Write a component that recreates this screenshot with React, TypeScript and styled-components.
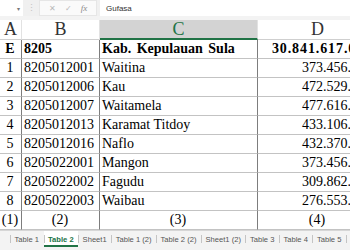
import styled, { createGlobalStyle, css } from "styled-components";

const GlobalStyle = createGlobalStyle`
  html, body {
    margin: 0;
    padding: 0;
    width: 350px;
    height: 250px;
    overflow: hidden;
    background: #ffffff;
  }
`;

const rows = [
  ["1", "8205012001", "Waitina", "373.456.000"],
  ["2", "8205012006", "Kau", "472.529.000"],
  ["3", "8205012007", "Waitamela", "477.616.000"],
  ["4", "8205012013", "Karamat Titdoy", "433.106.000"],
  ["5", "8205012016", "Naflo", "432.370.000"],
  ["6", "8205022001", "Mangon", "373.456.000"],
  ["7", "8205022002", "Fagudu", "309.862.000"],
  ["8", "8205022003", "Waibau", "276.553.000"],
];

const tabs = [
  "Table 1",
  "Table 2",
  "Sheet1",
  "Table 1 (2)",
  "Table 2 (2)",
  "Sheet1 (2)",
  "Table 3",
  "Table 4",
  "Table 5",
  "Table 6",
];

export default function App() {
  return (
    <Screen>
      <GlobalStyle />
      <FormulaBar>
        <NameBox>
          <Caret>▾</Caret>
        </NameBox>
        <Grip>⋮</Grip>
        <FxButtons>
          <FxIcon>✕</FxIcon>
          <FxIcon>✓</FxIcon>
          <FxLabel>fx</FxLabel>
        </FxButtons>
        <FormulaInput>Gufasa</FormulaInput>
      </FormulaBar>

      <Sheet>
        <ColHead>A</ColHead>
        <ColHead>B</ColHead>
        <ColHead $selected>C</ColHead>
        <ColHead>D</ColHead>

        <Cell $align="center" $bold>E</Cell>
        <Cell $bold>8205</Cell>
        <Cell $bold $wide>Kab. Kepulauan Sula</Cell>
        <Amount $bold>30.841.617.000</Amount>

        {rows.map((r) => (
          <Row key={r[1]} r={r} />
        ))}

        <Cell $align="center">(1)</Cell>
        <Cell $align="center">(2)</Cell>
        <Cell $align="center">(3)</Cell>
        <Cell $align="center">(4)</Cell>
      </Sheet>

      <TabBar>
        {tabs.map((t) => (
          <Tab key={t} $active={t === "Table 2"}>
            {t}
          </Tab>
        ))}
      </TabBar>
    </Screen>
  );
}

function Row({ r }: { r: string[] }) {
  return (
    <>
      <Cell $align="center">{r[0]}</Cell>
      <Cell>{r[1]}</Cell>
      <Cell>{r[2]}</Cell>
      <Amount>{r[3]}</Amount>
    </>
  );
}

const Screen = styled.div`
  width: 350px;
  height: 250px;
  display: flex;
  flex-direction: column;
  overflow: hidden;
  background: #f3f3f3;
`;

const FormulaBar = styled.div`
  height: 16px;
  display: flex;
  align-items: stretch;
  background: #f0f0f0;
  margin-bottom: 4px;
  font-family: "Liberation Sans", Arial, sans-serif;
`;

const NameBox = styled.div`
  width: 23px;
  background: #ffffff;
  display: flex;
  align-items: center;
  justify-content: flex-end;
  padding-right: 3px;
  box-sizing: border-box;
`;

const Caret = styled.span`
  font-size: 6px;
  color: #777;
`;

const Grip = styled.div`
  width: 16px;
  display: flex;
  align-items: center;
  justify-content: center;
  color: #c4c4c4;
  font-size: 9px;
`;

const FxButtons = styled.div`
  width: 58px;
  background: #fafafa;
  border: 1px solid #e6e6e6;
  box-sizing: border-box;
  display: flex;
  align-items: center;
  justify-content: space-evenly;
`;

const FxIcon = styled.span`
  font-size: 8px;
  color: #b8b8b8;
`;

const FxLabel = styled.span`
  font-family: "Liberation Serif", serif;
  font-style: italic;
  font-size: 9px;
  color: #888;
`;

const FormulaInput = styled.div`
  flex: 1;
  margin-left: 3px;
  background: #ffffff;
  display: flex;
  align-items: center;
  padding-left: 6px;
  font-size: 8px;
  color: #333;
`;

const Sheet = styled.div`
  display: grid;
  grid-template-columns: 22px 78px 158px 120px;
  grid-template-rows: 20px repeat(10, 19px);
  width: 378px;
  flex-shrink: 0;
  background: #ffffff;
  font-family: "Liberation Serif", Cambria, serif;
`;

const ColHead = styled.div<{ $selected?: boolean }>`
  display: flex;
  align-items: center;
  justify-content: center;
  font-size: 18px;
  color: #333;
  background: #ffffff;
  border-right: 1px solid #e2e2e2;
  border-bottom: 1px solid #cfcfcf;
  box-sizing: border-box;
  ${(p) =>
    p.$selected &&
    css`
      background: #d3d3d3;
      color: #217346;
      border-bottom: 2px solid #217346;
    `}
`;

const Cell = styled.div<{
  $align?: "left" | "center" | "right";
  $bold?: boolean;
  $wide?: boolean;
}>`
  display: flex;
  align-items: center;
  justify-content: ${(p) =>
    p.$align === "center"
      ? "center"
      : p.$align === "right"
      ? "flex-end"
      : "flex-start"};
  padding: 0 3px 0 2px;
  font-size: 14px;
  font-weight: ${(p) => (p.$bold ? 700 : 400)};
  word-spacing: ${(p) => (p.$wide ? "2px" : "0")};
  color: #000;
  white-space: nowrap;
  overflow: hidden;
  border-right: 1px solid #7d7d7d;
  border-bottom: 1px solid #c3c3c3;
  box-sizing: border-box;
`;

const Amount = styled(Cell)<{ $bold?: boolean }>`
  && {
    justify-content: flex-end;
    padding-right: 5px;
    letter-spacing: ${(p) => (p.$bold ? "0.9px" : "0")};
  }
`;

const TabBar = styled.div`
  flex: 1;
  display: flex;
  align-items: flex-start;
  padding-left: 10px;
  background: #f3f3f3;
  border-top: 1px solid #d6d6d6;
  font-family: "Liberation Sans", Arial, sans-serif;
`;

const Tab = styled.div<{ $active?: boolean }>`
  position: relative;
  height: 16px;
  display: flex;
  align-items: center;
  padding: 0 4.5px;
  font-size: 7.6px;
  white-space: nowrap;
  color: #555;
  box-sizing: border-box;

  &::before {
    content: "";
    position: absolute;
    left: 0;
    top: 4px;
    height: 8px;
    border-left: 1px solid #c4c4c4;
  }

  ${(p) =>
    p.$active &&
    css`
      background: #ffffff;
      color: #217346;
      font-weight: 700;
      border-bottom: 2px solid #217346;
      padding-top: 2px;
    `}
`;
